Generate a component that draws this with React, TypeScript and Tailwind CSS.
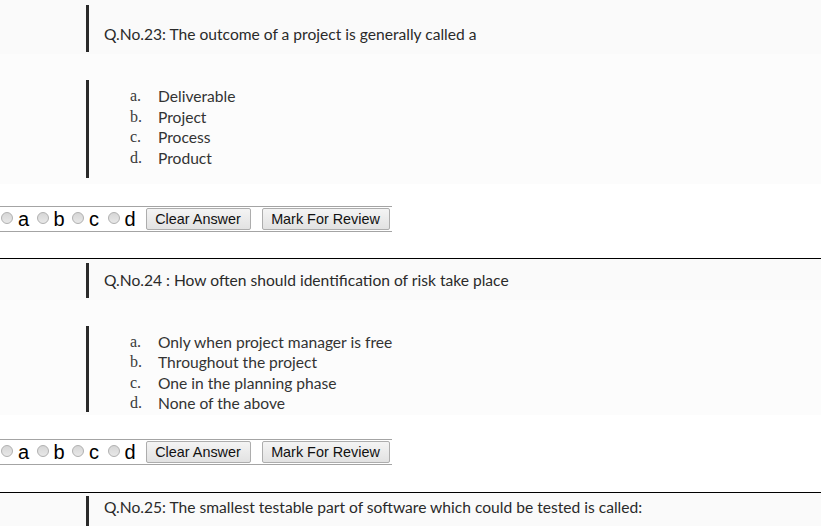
import React from "react";

const letters = ["a.", "b.", "c.", "d."];

function OptionList({ options }: { options: string[] }) {
  return (
    <ul className="ml-[41px] flex flex-col font-['Lato',sans-serif] text-[15.6px] leading-[20.5px] text-[#333]">
      {options.map((opt, i) => (
        <li key={opt} className="flex">
          <span className="w-[28px] font-['Liberation_Serif',serif] text-[16px] text-[#3a3a3a]">
            {letters[i]}
          </span>
          <span>{opt}</span>
        </li>
      ))}
    </ul>
  );
}

function Radio({ label }: { label: string }) {
  return (
    <label className="flex w-[35.5px] items-center">
      <input
        type="radio"
        name="ans"
        className="mb-[3px] ml-[1px] h-[12px] w-[12px] shrink-0 appearance-none rounded-full border border-[#b0b0b0] bg-gradient-to-b from-[#d6d6d6] to-[#e8e8e8]"
      />
      <span className="ml-[5px] text-[20px] leading-[20px] text-black">{label}</span>
    </label>
  );
}

function AnswerRow() {
  return (
    <div className="flex h-[26px] w-[392px] items-center border-y border-[#a4a4a4] font-['Liberation_Sans',Arial,sans-serif]">
      <div className="flex items-center">
        {["a", "b", "c", "d"].map((l) => (
          <Radio key={l} label={l} />
        ))}
      </div>
      <button
        type="button"
        className="ml-[3.5px] h-[22px] w-[105px] rounded-[2px] border border-[#adadad] bg-gradient-to-b from-[#f4f4f4] to-[#e2e2e2] text-[14.4px] leading-none text-[#111]"
      >
        Clear Answer
      </button>
      <button
        type="button"
        className="ml-[11px] h-[22px] w-[128px] rounded-[2px] border border-[#adadad] bg-gradient-to-b from-[#f4f4f4] to-[#e2e2e2] text-[14.4px] leading-none text-[#111]"
      >
        Mark For Review
      </button>
    </div>
  );
}

function QuestionText({ text }: { text: string }) {
  return (
    <p className="ml-[15px] font-['Lato',sans-serif] text-[15.6px] leading-[18px] text-[#2a2a2a]">
      {text}
    </p>
  );
}

export default function App() {
  return (
    <div className="min-h-[526px] w-[821px] overflow-hidden bg-white">
      {/* Q23 */}
      <div className="flex h-[54px] bg-[#fafafa] pl-[86px]">
        <div className="mt-[5px] h-[47px] w-[3px] bg-[#2a2a2a]" />
        <div className="mt-[25px]">
          <QuestionText text="Q.No.23: The outcome of a project is generally called a" />
        </div>
      </div>
      <div className="flex h-[130px] bg-[#fcfcfc] pl-[86px]">
        <div className="mt-[26px] h-[98px] w-[3px] bg-[#2a2a2a]" />
        <div className="mt-[32px]">
          <OptionList options={["Deliverable", "Project", "Process", "Product"]} />
        </div>
      </div>
      <div className="mt-[22px]">
        <AnswerRow />
      </div>
      <div className="mt-[26px] h-px bg-black" />

      {/* Q24 */}
      <div className="flex h-[41px] bg-[#fafafa] pl-[86px]">
        <div className="mt-[4px] h-[35px] w-[3px] bg-[#2a2a2a]" />
        <div className="mt-[12px]">
          <QuestionText text="Q.No.24 : How often should identification of risk take place" />
        </div>
      </div>
      <div className="flex h-[115px] bg-[#fcfcfc] pl-[86px]">
        <div className="mt-[26px] h-[86px] w-[3px] bg-[#2a2a2a]" />
        <div className="mt-[31.5px]">
          <OptionList
            options={[
              "Only when project manager is free",
              "Throughout the project",
              "One in the planning phase",
              "None of the above",
            ]}
          />
        </div>
      </div>
      <div className="mt-[24px]">
        <AnswerRow />
      </div>
      <div className="mt-[27px] h-px bg-black" />

      {/* Q25 */}
      <div className="flex h-[40px] bg-[#fafafa] pl-[86px]">
        <div className="mt-[3px] h-[37px] w-[3px] bg-[#2a2a2a]" />
        <div className="mt-[5px]">
          <QuestionText text="Q.No.25: The smallest testable part of software which could be tested is called:" />
        </div>
      </div>
    </div>
  );
}
